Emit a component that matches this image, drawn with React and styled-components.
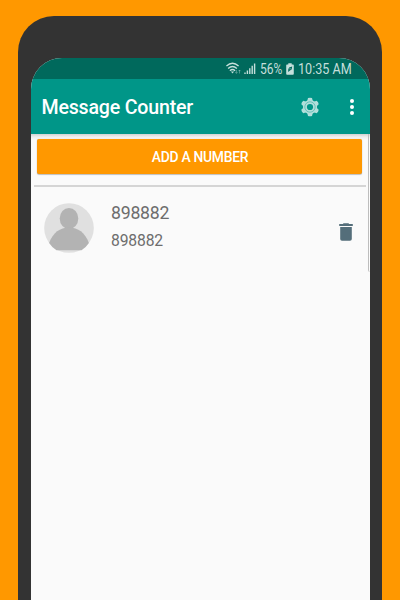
import React from "react";
import styled, { createGlobalStyle } from "styled-components";

const GlobalStyle = createGlobalStyle`
  * { box-sizing: border-box; }
  body {
    margin: 0;
    background: #ff9800;
    font-family: Roboto, "Liberation Sans", sans-serif;
  }
`;

const Page = styled.main`
  height: 600px;
  overflow: hidden;
  padding: 15.5px 18.5px 0 17.5px;
  background: #ff9800;
`;

const Phone = styled.div`
  height: 640px;
  padding: 42.5px 11.5px 0 13.5px;
  background: #333;
  border-radius: 36px 36px 0 0;
`;

const Screen = styled.div`
  height: 600px;
  display: flex;
  flex-direction: column;
  overflow: hidden;
  background: #fafafa;
  border-radius: 31px 31px 0 0;
`;

const StatusBar = styled.div`
  height: 21px;
  flex: none;
  display: flex;
  align-items: center;
  padding-left: 195px;
  background: #00695c;
  color: #c5dfdb;
`;

const StatusSlot = styled.span`
  width: ${(p) => p.$width}px;
  height: 14px;
  flex: none;
  display: flex;
  align-items: center;
`;

const StatusText = styled.span`
  font-size: 14px;
  line-height: 14px;
  white-space: nowrap;
  transform: scaleX(${(p) => p.$stretch});
  transform-origin: left center;
`;

const AppBar = styled.header`
  height: 54.5px;
  flex: none;
  display: flex;
  align-items: center;
  padding: 1px 0 0 10.5px;
  background: #009688;
  color: #fff;
`;

const Title = styled.h1`
  margin: 2px 0 0;
  flex: 1;
  font-size: 19.6px;
  line-height: 24px;
  font-weight: 500;
  letter-spacing: -0.2px;
  white-space: nowrap;
`;

const IconButton = styled.button`
  width: ${(p) => p.$width}px;
  height: 24px;
  padding: 0;
  border: 0;
  background: none;
  color: ${(p) => p.$color};
  display: flex;
  align-items: center;
  justify-content: center;
`;

const Body = styled.section`
  flex: 1;
  position: relative;
  padding: 5.5px 5px 0 2px;
  background: linear-gradient(#d2d2d2, #efefef 3px, #fafafa 6px);
`;

const AddButton = styled.button`
  display: block;
  width: 325px;
  height: 35px;
  margin-left: 4px;
  padding: 1px 0 0 1px;
  border: 0;
  border-radius: 2px;
  background: #ff9800;
  box-shadow: 0 1px 1px rgba(0, 0, 0, 0.22), 0 0 1px rgba(0, 0, 0, 0.25);
  color: #fff;
  font: 500 13.9px/34px Roboto, "Liberation Sans", sans-serif;
  letter-spacing: -0.29px;
`;

const Divider = styled.hr`
  width: 332px;
  height: 2px;
  margin: 11px 0 0 0.5px;
  border: 0;
  background: #d5d5d5;
`;

const ContactRow = styled.div`
  height: 82px;
  display: flex;
  align-items: center;
  padding-left: 11px;
`;

const Details = styled.div`
  flex: 1;
  margin: -3px 0 0 17px;
  color: #6d6d6d;
`;

const ContactName = styled.div`
  font-size: 17.7px;
  line-height: 28px;
  letter-spacing: -0.25px;
`;

const ContactNumber = styled.div`
  font-size: 15.7px;
  line-height: 27px;
  letter-spacing: -0.15px;
`;

const DeleteButton = styled(IconButton)`
  margin-top: 7px;
`;

const ScrollEdge = styled.span`
  position: absolute;
  top: 0;
  right: 0;
  width: 2px;
  height: 138px;
  border-left: 1px solid #bdbdbd;
  border-radius: 0 0 0 2px;
`;

const WifiIcon = () => (
  <svg width="16" height="14" viewBox="0 0 16 14" fill="none" stroke="currentColor" strokeWidth="1.3">
    <path d="M.4 4Q6.5-1.4 12.6 4M2.1 6.4Q6.5 2.5 10.9 6.4M3.9 8.7Q6.5 6.3 9.1 8.7" />
    <path d="M4.9 9.5h3.2L6.5 11.5z" fill="currentColor" stroke="none" />
    <path d="M10.4 8v3.2M9.3 10.2l1.1 1.2 1.1-1.2M13.5 11.5V8M12.4 9.2 13.5 8l1.1 1.2" strokeWidth=".7" opacity=".55" />
  </svg>
);

const SignalIcon = () => (
  <svg width="12" height="12" viewBox="0 0 12 12" fill="currentColor">
    <path d="M.3 9.5h1.4V11H.3zM2.7 7.5h1.4V11H2.7zM5.1 5.2h1.4V11H5.1zM7.5 2.8h1.4V11H7.5zM9.9.4h1.4V11H9.9z" />
  </svg>
);

const BatteryIcon = () => (
  <svg width="8" height="12" viewBox="0 0 8 12">
    <path d="M2.3.3h3.4v1.2H7q.8 0 .8.8v8.5q0 .9-.8.9H1q-.8 0-.8-.9V2.3q0-.8.8-.8h1.3z" fill="currentColor" />
    <path d="M6.2 3.6 3.1 4.5 2.3 6.3 2.1 9 4 7.4l1.6-1z" fill="#00695c" />
    <path d="M3.5 5.8h1.1" stroke="#c5dfdb" strokeWidth=".8" />
  </svg>
);

const gearTeeth = [0, 60, 120, 180, 240, 300];

const GearIcon = () => (
  <svg width="20" height="20" viewBox="-10 -10 20 20" fill="currentColor">
    {gearTeeth.map((angle) => (
      <path key={angle} d="M-2-8.9Q0-9.7 2-8.9L3-5H-3z" transform={`rotate(${angle})`} />
    ))}
    <circle r="7.1" />
    <circle r="5.2" fill="none" stroke="#009688" strokeWidth=".8" opacity=".5" />
    <circle r="3.1" fill="#009688" />
  </svg>
);

const MoreIcon = () => (
  <svg width="6" height="18" viewBox="0 0 6 18" fill="currentColor">
    <circle cx="3" cy="3.1" r="2" />
    <circle cx="3" cy="9" r="2" />
    <circle cx="3" cy="14.9" r="2" />
  </svg>
);

const Avatar = () => (
  <svg width="50" height="50" viewBox="0 0 50 50">
    <circle cx="25" cy="25" r="24.8" fill="#e0e0e0" />
    <g fill="#b3b3b3">
      <ellipse cx="25" cy="15.5" rx="9.3" ry="10.5" />
      <path d="M5.1 40C9 29.5 16 24.5 25 24.5S41 29.5 44.9 40Q42 44.5 37.5 47.3H12.5Q8 44.5 5.1 40z" />
    </g>
  </svg>
);

const TrashIcon = () => (
  <svg width="14" height="18" viewBox="0 0 14 18" fill="currentColor">
    <path d="M4.6.3h4.8l.8.8h3.6v1.8H.2V1.1h3.6zM1.2 4h11.6v12q0 1.8-1.8 1.8H3q-1.8 0-1.8-1.8z" />
  </svg>
);

export default function App() {
  return (
    <Page>
      <GlobalStyle />
      <Phone>
        <Screen>
          <StatusBar>
            <StatusSlot $width={18}><WifiIcon /></StatusSlot>
            <StatusSlot $width={15.5}><SignalIcon /></StatusSlot>
            <StatusSlot $width={26.5}><StatusText $stretch={0.86}>56%</StatusText></StatusSlot>
            <StatusSlot $width={12}><BatteryIcon /></StatusSlot>
            <StatusText $stretch={0.9}>10:35 AM</StatusText>
          </StatusBar>
          <AppBar>
            <Title>Message Counter</Title>
            <IconButton $width={47} $color="#b2dfdb" aria-label="Settings"><GearIcon /></IconButton>
            <IconButton $width={37} $color="#fff" aria-label="More options"><MoreIcon /></IconButton>
          </AppBar>
          <Body>
            <AddButton>ADD A NUMBER</AddButton>
            <Divider />
            <ContactRow>
              <Avatar />
              <Details>
                <ContactName>898882</ContactName>
                <ContactNumber>898882</ContactNumber>
              </Details>
              <DeleteButton $width={38} $color="#546e7a" aria-label="Delete"><TrashIcon /></DeleteButton>
            </ContactRow>
            <ScrollEdge />
          </Body>
        </Screen>
      </Phone>
    </Page>
  );
}
